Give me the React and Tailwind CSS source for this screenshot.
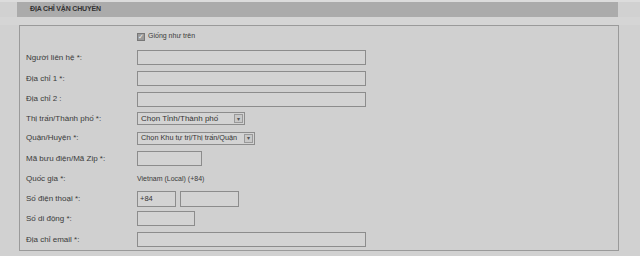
import React from 'react'

const font = { fontFamily: '"Liberation Sans", Arial, sans-serif' }

function TextBox({ w, h = 'h-[15px]', children }) {
  return (
    <div className={`${w} ${h} border border-[#8c8c8c] bg-[#d3d3d3] flex items-center px-[2px] text-[7.5px] text-[#333]`}>
      {children}
    </div>
  )
}

function Select({ w, label, size = 'text-[8px]' }) {
  return (
    <div className={`${w} h-[13px] border border-[#8c8c8c] bg-[#d3d3d3] flex items-center justify-between pl-[3px] pr-[1px] overflow-hidden`}>
      <span className={`${size} text-[#333] whitespace-nowrap leading-none`}>{label}</span>
      <span className="shrink-0 w-[9px] h-[9px] border border-[#999] bg-[#c8c8c8] flex items-center justify-center text-[6px] text-[#555] leading-none">▾</span>
    </div>
  )
}

function Row({ h, label, children }) {
  return (
    <div className={`flex items-center ${h}`}>
      <div className="w-[117px] pl-[6px] text-[8px] text-[#3a3a3a] whitespace-nowrap">{label}</div>
      <div className="flex items-center gap-[4px]">{children}</div>
    </div>
  )
}

export default function App() {
  return (
    <div className="w-[640px] h-[256px] bg-[#d1d1d1] relative overflow-hidden" style={font}>
      <div className="h-[2px] bg-[#dcdcdc]" />
      {/* Header */}
      <div className="ml-[17px] w-[601px] h-[15px] bg-[#ababab] flex items-center pl-[13px]">
        <span className="text-[7px] font-bold text-[#333] tracking-tight">ĐỊA CHỈ VẬN CHUYỂN</span>
      </div>
      <div className="h-[8px] bg-[#d5d5d5]" />

      {/* Fieldset */}
      <div className="ml-[19px] w-[600px] h-[226px] border border-[#9a9a9a] bg-[#d0d0d0] flex flex-col">
        <div className="flex items-center h-[21px] pl-[117px] gap-[3px]">
          <span className="w-[8px] h-[8px] border border-[#777] bg-[#9a9a9a] flex items-center justify-center text-[7px] leading-none text-[#f0f0f0]">✓</span>
          <span className="text-[7px] text-[#3a3a3a]">Giống như trên</span>
        </div>
        <Row h="h-[21px]" label="Người liên hệ *:">
          <TextBox w="w-[229px]" />
        </Row>
        <Row h="h-[21px]" label="Địa chỉ 1 *:">
          <TextBox w="w-[229px]" />
        </Row>
        <Row h="h-[20px]" label="Địa chỉ 2 :">
          <TextBox w="w-[229px]" />
        </Row>
        <Row h="h-[19px]" label="Thị trấn/Thành phố *:">
          <Select w="w-[108px]" label="Chọn Tỉnh/Thành phố" />
        </Row>
        <Row h="h-[20px]" label="Quận/Huyện *:">
          <Select w="w-[118px]" size="text-[7.3px]" label="Chọn Khu tự trị/Thị trấn/Quận" />
        </Row>
        <Row h="h-[21px]" label="Mã bưu điện/Mã Zip *:">
          <TextBox w="w-[65px]" />
        </Row>
        <Row h="h-[20px]" label="Quốc gia *:">
          <span className="text-[7px] text-[#3a3a3a]">Vietnam (Local) (+84)</span>
        </Row>
        <Row h="h-[19px]" label="Số điện thoại *:">
          <TextBox w="w-[39px]" h="h-[16px]">+84</TextBox>
          <TextBox w="w-[59px]" h="h-[16px]" />
        </Row>
        <Row h="h-[21px]" label="Số di động *:">
          <TextBox w="w-[58px]" />
        </Row>
        <Row h="h-[21px]" label="Địa chỉ email *:">
          <TextBox w="w-[229px]" />
        </Row>
      </div>
    </div>
  )
}
